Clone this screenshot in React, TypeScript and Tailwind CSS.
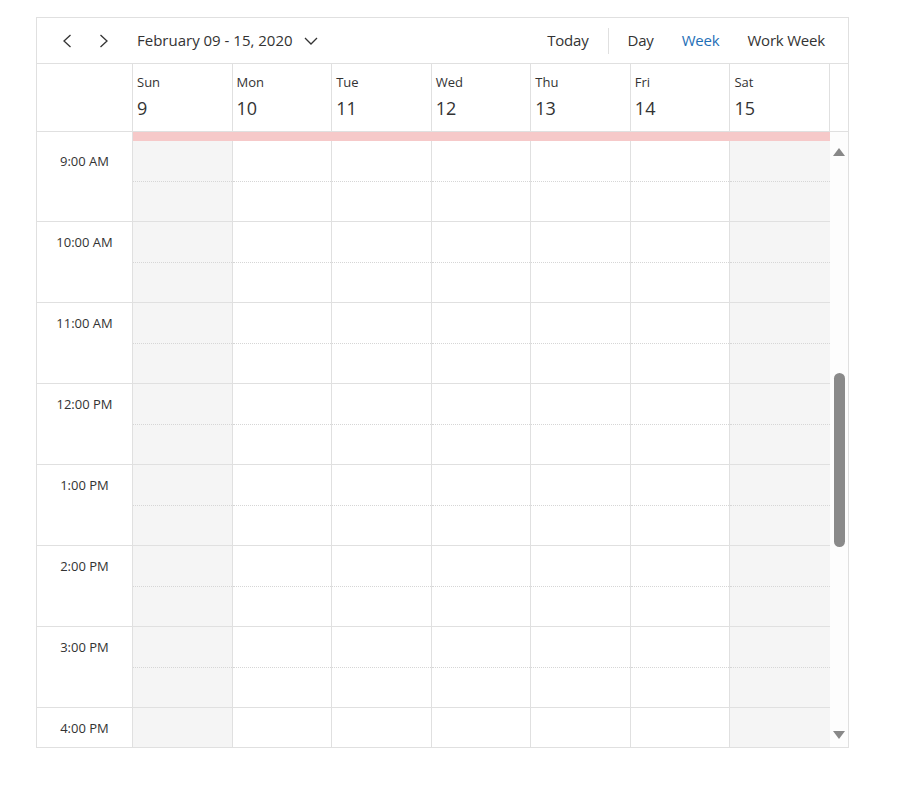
import React from 'react';

const days = [
  { name: 'Sun', num: 9, off: true },
  { name: 'Mon', num: 10, off: false },
  { name: 'Tue', num: 11, off: false },
  { name: 'Wed', num: 12, off: false },
  { name: 'Thu', num: 13, off: false },
  { name: 'Fri', num: 14, off: false },
  { name: 'Sat', num: 15, off: true },
];

const hours = ['9:00 AM', '10:00 AM', '11:00 AM', '12:00 PM', '1:00 PM', '2:00 PM', '3:00 PM', '4:00 PM'];

const Chevron = ({ dir }: { dir: 'left' | 'right' | 'down' }) => {
  if (dir === 'down') {
    return (
      <svg width="14" height="8" viewBox="0 0 14 8" fill="none">
        <polyline points="1,1 7,7 13,1" stroke="#333" strokeWidth="1.3" />
      </svg>
    );
  }
  return (
    <svg width="10" height="14" viewBox="0 0 10 14" fill="none">
      <polyline
        points={dir === 'left' ? '8.5,1 2,7 8.5,13' : '1.5,1 8,7 1.5,13'}
        stroke="#333"
        strokeWidth="1.3"
      />
    </svg>
  );
};

const App: React.FC = () => {
  return (
    <div className="min-h-screen bg-white pt-[17px] pl-[36px] font-['Open_Sans',sans-serif] text-[#333]">
      <div className="w-[813px] h-[731px] border border-[#e0e0e0] flex flex-col overflow-hidden">
        {/* toolbar */}
        <div className="h-[46px] border-b border-[#e0e0e0] flex items-center shrink-0">
          <div className="ml-[25px] flex items-center">
            <Chevron dir="left" />
          </div>
          <div className="ml-[27px] flex items-center">
            <Chevron dir="right" />
          </div>
          <span className="ml-[28px] text-[15px]">February 09 - 15, 2020</span>
          <div className="ml-[11px] flex items-center">
            <Chevron dir="down" />
          </div>
          <div className="ml-auto mr-[23px] flex items-center text-[15px] tracking-[-0.2px]">
            <span>Today</span>
            <span className="mx-[19px] w-px h-[26px] bg-[#e0e0e0]" />
            <span>Day</span>
            <span className="ml-[28px] text-[#1f6fb7]">Week</span>
            <span className="ml-[28px]">Work Week</span>
          </div>
        </div>

        {/* day header */}
        <div className="h-[68px] border-b border-[#e0e0e0] grid grid-cols-[96px_repeat(7,minmax(0,1fr))_18px] shrink-0">
          <div className="border-r border-[#e0e0e0]" />
          {days.map((d) => (
            <div key={d.name} className="border-r border-[#e0e0e0] pl-[4px] pt-[9px]">
              <div className="text-[13px] leading-[18px]">{d.name}</div>
              <div className="text-[18px] leading-[24px] mt-[5px]">{d.num}</div>
            </div>
          ))}
          <div />
        </div>

        {/* body */}
        <div className="flex-1 flex overflow-hidden">
          <div className="flex-1 flex flex-col">
            <div className="grid grid-cols-[96px_repeat(7,minmax(0,1fr))] h-[9px] shrink-0">
              <div className="border-r border-[#e0e0e0]" />
              <div className="col-span-7 bg-[#f6c9c9]" />
            </div>
            {hours.map((h) => (
              <div
                key={h}
                className="grid grid-cols-[96px_repeat(7,minmax(0,1fr))] h-[81px] shrink-0 border-b border-[#e0e0e0]"
              >
                <div className="border-r border-[#e0e0e0]">
                  <div className="h-[41px] flex items-center justify-center text-[13px]">{h}</div>
                </div>
                {days.map((d, i) => (
                  <div
                    key={d.name}
                    className={`flex flex-col ${i < 6 ? 'border-r border-[#e0e0e0]' : ''} ${d.off ? 'bg-[#f5f5f5]' : 'bg-white'}`}
                  >
                    <div className="h-[41px] border-b border-dotted border-[#d6d6d6]" />
                    <div className="flex-1" />
                  </div>
                ))}
              </div>
            ))}
          </div>

          {/* scrollbar */}
          <div className="w-[18px] shrink-0 bg-[#fdfdfd] flex flex-col items-center">
            <div className="mt-[16px] w-0 h-0 border-l-[6px] border-r-[6px] border-b-[8px] border-l-transparent border-r-transparent border-b-[#888]" />
            <div className="mt-[217px] w-[11px] h-[174px] rounded-full bg-[#8a8a8a]" />
            <div className="mt-[184px] w-0 h-0 border-l-[6px] border-r-[6px] border-t-[8px] border-l-transparent border-r-transparent border-t-[#888]" />
          </div>
        </div>
      </div>
    </div>
  );
};

export default App;
